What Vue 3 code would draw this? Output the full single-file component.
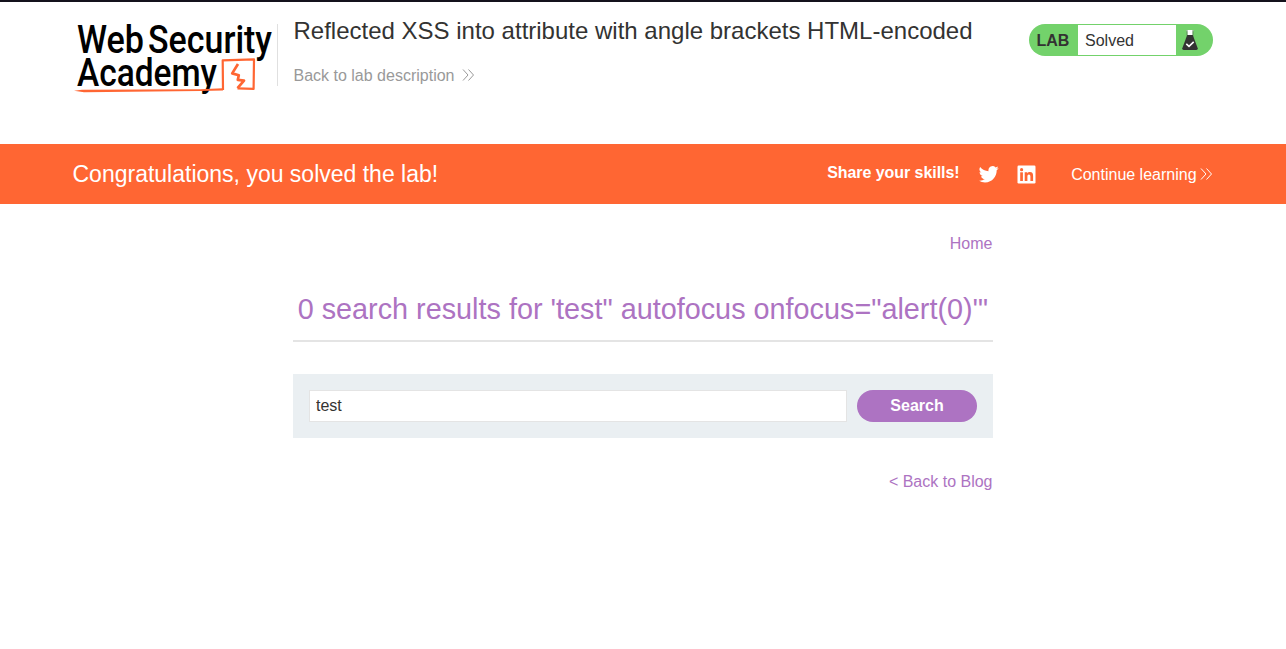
<script setup>
import { ref } from 'vue'

const query = ref('test')
</script>

<template>
  <div class="page">
    <header class="header">
      <svg class="logo" width="204" height="80" viewBox="74 20 204 80" role="img" aria-label="Web Security Academy">
        <g class="logo-text">
          <text x="77" y="53" textLength="67" lengthAdjust="spacingAndGlyphs">Web</text>
          <text x="148" y="53" textLength="124" lengthAdjust="spacingAndGlyphs">Security</text>
          <text x="77" y="85.5" textLength="140" lengthAdjust="spacingAndGlyphs">Academy</text>
        </g>
        <path class="logo-fill" d="M74 90.7 L82 89.8 L200 89.2 L223 88.2 V90.6 L200 91 L84 92.3 Z" />
        <path class="logo-line" d="M223 90 L222.7 60.3 L254 59.4 L253.6 88.9 L237.5 88.4" />
        <path class="logo-line bolt" d="M237.500 88.200 L244 80.600 L237.800 79.800 L238.800 75.200 L232.200 73.400 L238 64" />
      </svg>
      <div class="title">
        <h2>Reflected XSS into attribute with angle brackets HTML-encoded</h2>
        <a class="back">Back to lab description
          <svg width="13" height="12" viewBox="0 0 13 12"><path d="M1 0.5 L6 6 L1 11.5 M6.5 0.5 L11.5 6 L6.5 11.5" /></svg>
        </a>
      </div>
      <div class="status">
        <span class="lab">LAB</span>
        <span class="state">Solved</span>
        <svg class="flask" width="18" height="22" viewBox="0 0 18 22">
          <path d="M5.5 1 H12.5 V2.3 H5.5 Z" fill="#fff" />
          <path d="M6.4 2 H11.6 V6.5 H6.4 Z" fill="#fff" />
          <path d="M6 1 V6.5 M12 1 V6.5" stroke="#5a7a58" stroke-width=".8" />
          <path d="M6.2 6 H11.8 L16.7 19.2 Q17 21 15.3 21 H2.7 Q1 21 1.3 19.2 Z" fill="#333332" />
          <path d="M5.3 14.8 L8 17.3 L12.7 12.8" fill="none" stroke="#fff" stroke-width="1.6" />
        </svg>
      </div>
    </header>

    <section class="banner">
      <h4>Congratulations, you solved the lab!</h4>
      <strong>Share your skills!</strong>
      <svg class="twitter" width="20" height="20" viewBox="0 0 24 24">
        <path d="M23.6 4.9c-.9.4-1.8.6-2.8.8 1-.6 1.8-1.6 2.2-2.7-1 .6-2 1-3.1 1.2a4.9 4.9 0 0 0-8.4 4.5C7.400 8.500 3.800 6.500 1.400 3.600a4.900 4.900 0 0 0 1.500 6.600c-.8 0-1.600-.2-2.200-.6v.1c0 2.400 1.700 4.400 3.900 4.800-.7.2-1.500.2-2.200.1.600 2 2.400 3.400 4.600 3.400A9.900 9.900 0 0 1-.300 20a13.900 13.900 0 0 0 7.500 2.200c9.100 0 14-7.500 14-14v-.6c1-.7 1.800-1.600 2.400-2.700z" />
      </svg>
      <svg class="linkedin" width="19" height="19" viewBox="0 0 19 19">
        <rect x=".5" y=".5" width="18" height="18" rx="1.2" fill="#fff" />
        <g fill="#ff6633">
          <circle cx="4.600" cy="4.700" r="1.600" />
          <rect x="3.200" y="7.300" width="2.700" height="8.700" />
          <path d="M7.700 7.300h2.600v1.200c.5-.9 1.400-1.400 2.600-1.400 2.500 0 3.200 1.600 3.200 4V16h-2.700v-4.400c0-1.200-.3-2.200-1.500-2.200s-1.500 1-1.500 2.200V16H7.700z" />
        </g>
      </svg>
      <a class="continue">Continue learning
        <svg width="13" height="12" viewBox="0 0 13 12"><path d="M1 0.5 L6 6 L1 11.5 M6.500 0.500 L11.500 6 L6.500 11.500" /></svg>
      </a>
    </section>

    <main class="content">
      <nav><a>Home</a></nav>
      <h1>0 search results for 'test" autofocus onfocus="alert(0)"'</h1>
      <hr />
      <form class="search" @submit.prevent>
        <input v-model="query" type="text" />
        <button type="submit">Search</button>
      </form>
      <div class="back-link"><a>&lt; Back to Blog</a></div>
    </main>
  </div>
</template>

<style>
body {
  margin: 0;
  background: #fff;
}
</style>

<style scoped>
.page {
  box-sizing: border-box;
  height: 649px;
  border-top: 2px solid #14121c;
  color: #333332;
  font: 16px/20px "Liberation Sans", Arial, sans-serif;
  overflow: hidden;
}
h1, h2, h4 {
  margin: 0;
  font-weight: 400;
  white-space: nowrap;
}
.header {
  display: flex;
  align-items: flex-start;
  height: 142px;
  box-sizing: border-box;
  padding: 18px 73px 0 74px;
}
.logo {
  flex: none;
  overflow: visible;
}
.logo-text {
  font: 500 38px Roboto, sans-serif;
  fill: #000;
}
.logo-fill {
  fill: #ff6633;
}
.logo-line {
  fill: none;
  stroke: #ff6633;
  stroke-width: 2.2;
  stroke-linejoin: round;
}
.bolt {
  stroke-width: 2.7;
}
.title {
  flex: 1;
  margin-top: 4px;
  border-left: 1px solid #e0e0e0;
  height: 62px;
  padding-left: 15.5px;
  margin-left: -1px;
}
.title h2 {
  margin-top: -7px;
  font-size: 24px;
  line-height: 28px;
}
.back {
  display: block;
  margin-top: 21px;
  line-height: 20px;
  color: #999;
}
.back svg {
  margin-left: 3.5px;
  vertical-align: 0;
}
a svg {
  fill: none;
  stroke: currentColor;
  stroke-width: 1;
  vertical-align: 0;
}
.status {
  display: flex;
  align-items: center;
  box-sizing: border-box;
  width: 184px;
  height: 32px;
  margin-top: 4px;
  padding: 1px 0;
  border-radius: 16px;
  background: #73d26b;
}
.lab {
  width: 49px;
  box-sizing: border-box;
  padding: 2px 0 0 7.5px;
  font-weight: 700;
}
.state {
  width: 98px;
  height: 30px;
  line-height: 31px;
  box-sizing: border-box;
  padding-left: 7px;
  background: #fff;
}
.flask {
  margin-left: 5px;
}
.banner {
  display: flex;
  height: 60px;
  box-sizing: border-box;
  padding: 0 73px 0 72.500px;
  background: #ff6633;
  color: #fff;
}
.banner h4 {
  flex: 1;
  font-size: 23px;
  line-height: 60px;
}
.banner strong {
  line-height: 57px;
  letter-spacing: -0.05px;
}
.twitter {
  margin: 20px 0 0 19.500px;
  fill: #fff;
}
.linkedin {
  margin: 21px 0 0 18px;
}
.continue {
  margin-left: 35px;
  line-height: 61px;
}
.continue svg {
  margin-left: -1px;
}
.content {
  width: 700px;
  margin: 0 auto;
  color: #ad73c2;
}
nav {
  padding-top: 30px;
  padding-right: 0.500px;
  text-align: right;
}
h1 {
  margin-top: 35px;
  font-size: 28.8px;
  line-height: 40px;
  text-align: center;
}
hr {
  height: 2px;
  margin: 11px 0 32px;
  border: 0;
  background: #e4e4e4;
}
.search {
  display: flex;
  gap: 10px;
  height: 64px;
  box-sizing: border-box;
  padding: 16px;
  background: #eaeff2;
}
input {
  flex: 1;
  min-width: 0;
  box-sizing: border-box;
  height: 32px;
  padding: 0 6px;
  border: 1px solid #e4e4e4;
  color: #333332;
  font: inherit;
  outline: 0;
}
button {
  width: 120px;
  height: 32px;
  padding: 0;
  border: 0;
  border-radius: 16px;
  background: #ad73c2;
  color: #fff;
  font: 700 16px "Liberation Sans", Arial, sans-serif;
}
.back-link {
  margin-top: 34px;
  padding-right: 0.500px;
  text-align: right;
}
</style>
